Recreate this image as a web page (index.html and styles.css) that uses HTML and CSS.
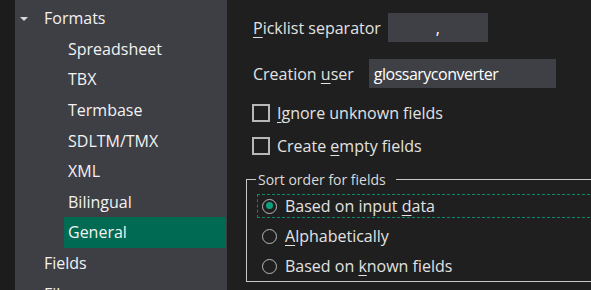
FILE: index.html
```html
<!DOCTYPE html>
<html lang="en">
<head>
    <meta charset="UTF-8">
    <title>Options - General</title>
    <link rel="stylesheet" href="styles.css">
</head>
<body>
    <div class="window">
        <div class="strip"></div>
        <div class="tree">
            <div class="node parent"><span class="arrow"></span>Formats</div>
            <div class="node child">Spreadsheet</div>
            <div class="node child">TBX</div>
            <div class="node child">Termbase</div>
            <div class="node child">SDLTM/TMX</div>
            <div class="node child">XML</div>
            <div class="node child">Bilingual</div>
            <div class="node selected">General</div>
            <div class="node parent">Fields</div>
            <div class="node parent">Files</div>
        </div>
        <div class="content">
            <div class="field-row first">
                <span class="label"><u>P</u>icklist separator</span>
                <span class="textbox separator">,</span>
            </div>
            <div class="field-row second">
                <span class="label">Creation <u>u</u>ser</span>
                <span class="textbox user">glossaryconverter</span>
            </div>
            <div class="check-row">
                <span class="checkbox"></span>
                <span><u>I</u>gnore unknown fields</span>
            </div>
            <div class="check-row">
                <span class="checkbox"></span>
                <span>Create <u>e</u>mpty fields</span>
            </div>
            <fieldset class="group">
                <legend>Sort order for fields</legend>
                <div class="radio-row focused">
                    <span class="radio checked"></span>
                    <span>Based on input <u>d</u>ata</span>
                </div>
                <div class="radio-row">
                    <span class="radio"></span>
                    <span><u>A</u>lphabetically</span>
                </div>
                <div class="radio-row">
                    <span class="radio"></span>
                    <span>Based on <u>k</u>nown fields</span>
                </div>
            </fieldset>
        </div>
    </div>
</body>
</html>
```

FILE: styles.css
```css
html, body {
    margin: 0;
    padding: 0;
    background-color: #1f1f1f;
    overflow: hidden;
}
body {
    font-family: "Open Sans", "Noto Sans", Arial, sans-serif;
    font-size: 16px;
    color: #e2e2e2;
}
u {
    text-decoration-thickness: 1px;
    text-underline-offset: 3px;
}
.window {
    display: flex;
    height: 290px;
    overflow: hidden;
}
.strip {
    flex-shrink: 0;
    width: 15px;
    background-color: #1c1c1c;
}
.tree {
    flex-shrink: 0;
    width: 212px;
    background-color: #3e3e45;
    padding-top: 3px;
    color: #f2f2f2;
}
.node {
    height: 30.6px;
    display: flex;
    align-items: center;
    white-space: nowrap;
}
.node.parent {
    position: relative;
    padding-left: 29px;
}
.node.child {
    padding-left: 53px;
}
.node.selected {
    margin-left: 49px;
    width: 158px;
    padding-left: 4px;
    background-color: #006a53;
}
.arrow {
    position: absolute;
    left: 5px;
    top: 14px;
    border-left: 4px solid transparent;
    border-right: 4px solid transparent;
    border-top: 4px solid #d8d8d8;
}
.content {
    flex: 1;
    min-width: 0;
    padding-left: 26px;
}
.field-row {
    display: flex;
    align-items: center;
    height: 29px;
    white-space: nowrap;
}
.field-row.first {
    margin-top: 13px;
}
.field-row.second {
    margin-top: 17px;
    margin-bottom: 16px;
}
.textbox {
    flex-shrink: 0;
    background-color: #3f3f46;
    height: 29px;
    display: flex;
    align-items: center;
    color: #ffffff;
}
.separator {
    width: 100px;
    margin-left: 7px;
    justify-content: center;
}
.user {
    width: 182px;
    margin-left: 15px;
    padding-left: 5px;
    letter-spacing: -0.5px;
}
.check-row {
    display: flex;
    align-items: center;
    height: 18px;
    margin-bottom: 15px;
    white-space: nowrap;
}
.checkbox {
    flex-shrink: 0;
    width: 14px;
    height: 14px;
    border: 2px solid #b8b8b8;
    margin-left: -1px;
    margin-right: 7px;
}
.group {
    box-sizing: border-box;
    margin: 9px 0 0 -7px;
    width: 420px;
    height: 112px;
    border: 1px solid #c8c8c8;
    padding: 0 0 0 10px;
}
.group legend {
    font-size: 14px;
    padding: 0 10px 0 2px;
    margin-left: -1px;
    color: #dadada;
}
.radio-row {
    box-sizing: border-box;
    display: flex;
    align-items: center;
    height: 24px;
    margin-bottom: 6px;
    padding-left: 4px;
    border: 1px dashed transparent;
    white-space: nowrap;
}
.radio-row.focused {
    border-color: #0a8a6a;
    margin-top: 5px;
}
.radio {
    flex-shrink: 0;
    box-sizing: border-box;
    position: relative;
    width: 15px;
    height: 15px;
    border: 1.5px solid #b8b8b8;
    border-radius: 50%;
    margin-right: 8px;
}
.radio.checked::after {
    content: "";
    position: absolute;
    left: 2.5px;
    top: 2.5px;
    width: 7px;
    height: 7px;
    border-radius: 50%;
    background-color: #11a07c;
}
```
